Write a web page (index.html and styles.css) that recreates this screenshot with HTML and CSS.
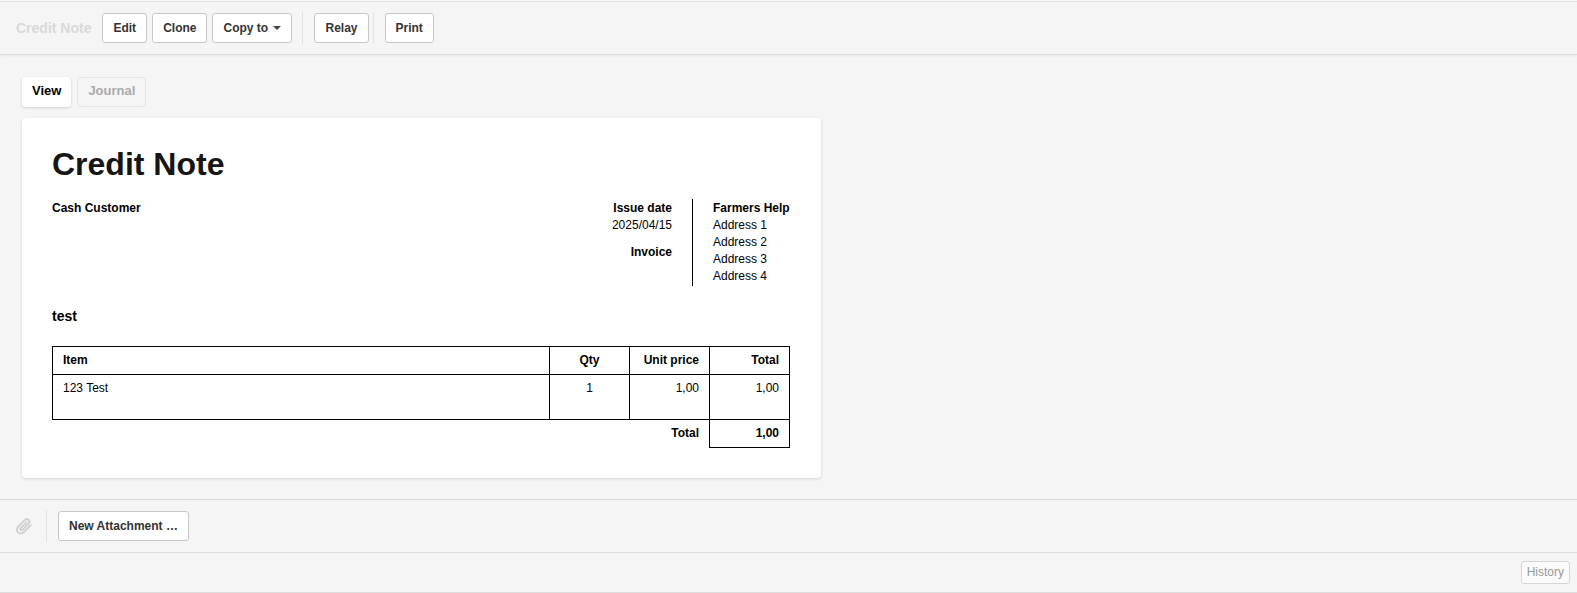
FILE: index.html
```html
<!DOCTYPE html>
<html lang="en">
<head>
<meta charset="utf-8">
<title>Credit Note</title>
<link rel="stylesheet" href="styles.css">
</head>
<body>
<header class="toolbar">
  <span class="toolbar-title">Credit Note</span>
  <button class="btn">Edit</button>
  <button class="btn">Clone</button>
  <button class="btn">Copy to <span class="caret"></span></button>
  <span class="sep sep-a"></span>
  <button class="btn btn-tight">Relay</button>
  <span class="sep sep-b"></span>
  <button class="btn">Print</button>
</header>
<main class="content">
  <nav class="tabs">
    <span class="tab tab-active">View</span>
    <span class="tab tab-muted">Journal</span>
  </nav>
  <article class="card">
    <h1 class="doc-title">Credit Note</h1>
    <section class="meta">
      <div class="customer"><b>Cash Customer</b></div>
      <div class="dates">
        <b>Issue date</b>
        <span>2025/04/15</span>
        <b class="invoice">Invoice</b>
      </div>
      <div class="company">
        <b>Farmers Help</b>
        <span>Address 1</span>
        <span>Address 2</span>
        <span>Address 3</span>
        <span>Address 4</span>
      </div>
    </section>
    <p class="note">test</p>
    <table class="items">
      <thead>
        <tr><th class="col-item">Item</th><th class="col-qty">Qty</th><th class="col-num">Unit price</th><th class="col-num">Total</th></tr>
      </thead>
      <tbody>
        <tr class="line"><td class="col-item">123 Test</td><td class="col-qty">1</td><td class="col-num">1,00</td><td class="col-num">1,00</td></tr>
        <tr class="sum"><td colspan="3" class="sum-label">Total</td><td class="col-num sum-value">1,00</td></tr>
      </tbody>
    </table>
  </article>
</main>
<section class="attach">
  <svg class="clip" width="18" height="18" viewBox="0 0 18 18" aria-hidden="true"><path d="M15.800 8.200 9 15c-1.800 1.800-4.500 1.900-6 .4s-1.400-4.200.4-6l6.300-6.300c1.200-1.200 3-1.300 4-.3s.9 2.800-.3 4L7.600 12.600c-.6.600-1.500.7-2 .2s-.4-1.400.2-2l5.500-5.500" fill="none" stroke="#cfcfcf" stroke-width="1.800" stroke-linecap="round" stroke-linejoin="round"/></svg>
  <span class="sep"></span>
  <button class="btn">New Attachment …</button>
</section>
<footer class="footer">
  <span class="history">History</span>
</footer>
</body>
</html>
```

FILE: styles.css
```css
* { box-sizing: border-box; }
html, body { margin: 0; height: 593px; overflow: hidden; }
body {
  background: #f5f5f5;
  color: #111;
  font: 12px/17px "Liberation Sans", Arial, sans-serif;
  border-top: 1px solid #fbfbfb;
}
.toolbar {
  height: 54px;
  display: flex;
  align-items: center;
  padding: 0 16px;
  border-top: 1px solid #dedede;
  border-bottom: 1px solid #dcdcdc;
  box-shadow: 0 1px 2px rgba(0,0,0,.05);
}
.toolbar-title {
  font-size: 14px;
  font-weight: 700;
  color: #d9d9d9;
  margin-right: 11px;
}
.btn {
  height: 30px;
  padding: 0 10px;
  margin-right: 5px;
  background: #fff;
  border: 1px solid #c8c8c8;
  border-radius: 3px;
  color: #333;
  font: 700 12px "Liberation Sans", Arial, sans-serif;
}
.btn-tight { margin-right: 4px; }
.caret {
  display: inline-block;
  margin-left: 2px;
  vertical-align: 2px;
  border-top: 4px solid #444;
  border-left: 4px solid transparent;
  border-right: 4px solid transparent;
}
.sep { width: 1px; height: 32px; background: #e2e2e2; flex: none; }
.sep-a { margin: 0 11px 0 5px; }
.sep-b { margin: 0 11px 0 0; }
.content { height: 444px; padding: 22px 22px 0; }
.tabs { display: flex; gap: 6px; height: 30px; margin-bottom: 11px; }
.tab {
  display: flex;
  align-items: center;
  padding: 0 10px 3px;
  border-radius: 4px;
  font-size: 13px;
  font-weight: 700;
}
.tab-active { background: #fff; color: #000; box-shadow: 0 1px 3px rgba(0,0,0,.15); }
.tab-muted { color: #aaa; border: 1px solid #e6e6e6; }
.card {
  width: 799px;
  height: 360px;
  padding: 30px 30px 0;
  background: #fff;
  border-radius: 4px;
  box-shadow: 0 1px 3px rgba(0,0,0,.14);
}
.doc-title { margin: 0 0 19px; font-size: 32px; line-height: 32px; font-weight: 700; color: #151515; }
.meta { display: flex; height: 87px; color: #000; }
.customer { flex: 1; padding-top: 1px; }
.dates, .company { display: flex; flex-direction: column; padding-top: 1px; }
.dates { align-items: flex-end; padding-right: 20px; border-right: 1px solid #000; }
.company { padding-left: 20px; width: 98px; white-space: nowrap; }
.invoice { margin-top: 10px; }
.note { margin: 21px 0 0; font-size: 14px; line-height: 18px; font-weight: 700; color: #000; }
.items { width: 738px; margin-top: 21px; border-collapse: collapse; table-layout: fixed; color: #000; }
.items th, .items td { border: 1px solid #000; padding: 5px 10px; vertical-align: top; font-size: 12px; line-height: 17px; }
.items thead tr { height: 28px; }
.line { height: 45px; }
.sum { height: 28px; }
.col-item { text-align: left; }
.col-qty { width: 80px; text-align: center; }
.col-num { width: 80px; text-align: right; }
.items .sum-label { border: 0; border-top: 1px solid #000; text-align: right; font-weight: 700; }
.sum-value { font-weight: 700; }
.attach {
  height: 53px;
  display: flex;
  align-items: center;
  padding: 0 15px;
  border-top: 1px solid #dcdcdc;
}
.clip { margin-right: 13px; }
.attach .sep { margin-right: 11px; }
.footer {
  height: 41px;
  display: flex;
  justify-content: flex-end;
  align-items: center;
  padding-right: 7px;
  border-top: 1px solid #dcdcdc;
  border-bottom: 1px solid #dcdcdc;
}
.history {
  padding: 2px 5px;
  background: #fbfbfb;
  border: 1px solid #d6d6d6;
  border-radius: 3px;
  color: #999;
  line-height: 17px;
}
```
